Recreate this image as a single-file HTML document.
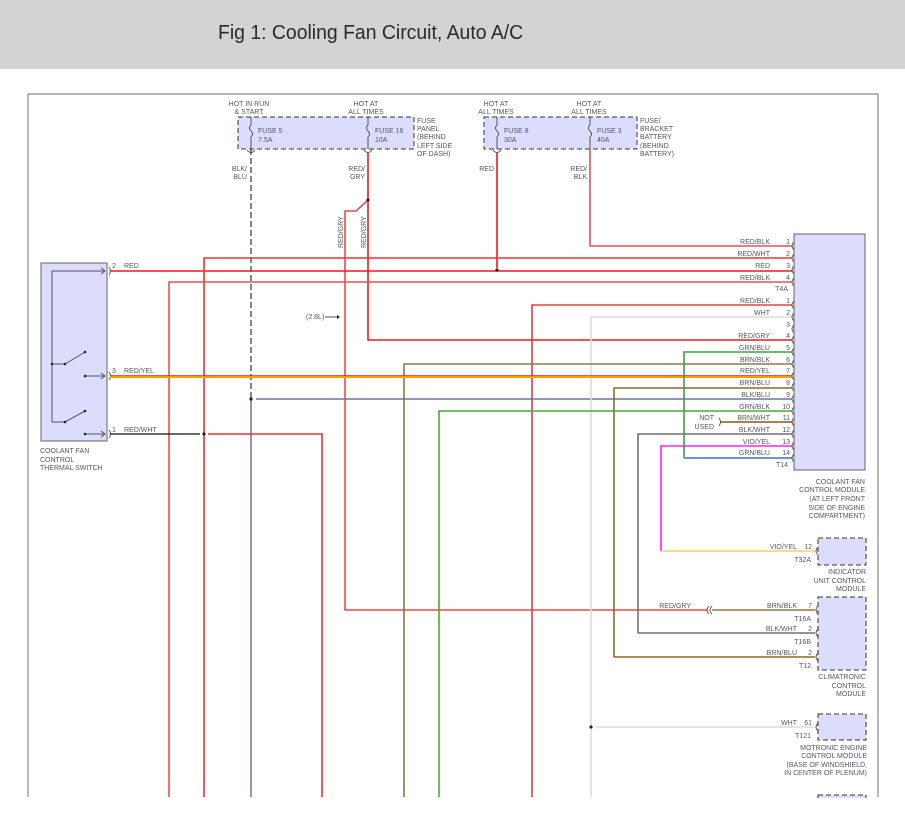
<!DOCTYPE html>
<html><head><meta charset="utf-8"><style>
html,body{margin:0;padding:0;background:#fff;width:905px;height:821px;overflow:hidden}
.hdr{position:absolute;left:0;top:0;width:905px;height:69px;background:#d3d3d3}
.ttl{position:absolute;left:218px;top:22px;font:20px "Liberation Sans",sans-serif;color:#2a2a2a;transform:scaleX(0.97);transform-origin:left top;white-space:nowrap}
svg{position:absolute;left:0;top:0}
text{font-family:"Liberation Sans",sans-serif;font-size:7px;fill:#555566}
</style></head><body>
<div class="hdr"></div>
<div class="ttl">Fig 1: Cooling Fan Circuit, Auto A/C</div>
<svg width="905" height="821" viewBox="0 0 905 821">
<path d="M28,797 V94 H878 V797" fill="none" stroke="#8a8a8a" stroke-width="1.2"/>
<rect x="238" y="117" width="176" height="32" fill="#dcdcfc" stroke="#333" stroke-dasharray="5,3"/>
<rect x="484" y="117" width="153" height="32" fill="#dcdcfc" stroke="#333" stroke-dasharray="5,3"/>
<g fill="none" stroke="#333" stroke-width="0.8">
<path d="M251,117 v8 q-3,3 0,6 q3,3 0,6 v12"/>
<path d="M368,117 v8 q-3,3 0,6 q3,3 0,6 v12"/>
<path d="M497,117 v8 q-3,3 0,6 q3,3 0,6 v12"/>
<path d="M590,117 v8 q-3,3 0,6 q3,3 0,6 v12"/>
<path d="M247,150 q4,5 8,0 M364,150 q4,5 8,0 M493,150 q4,5 8,0"/>
</g>
<g text-anchor="middle">
<text x="249" y="106">HOT IN RUN</text><text x="249" y="114">&amp; START</text>
<text x="366" y="106">HOT AT</text><text x="366" y="114">ALL TIMES</text>
<text x="496" y="106">HOT AT</text><text x="496" y="114">ALL TIMES</text>
<text x="589" y="106">HOT AT</text><text x="589" y="114">ALL TIMES</text>
</g>
<text x="258" y="133">FUSE 5</text><text x="258" y="142">7.5A</text>
<text x="375" y="133">FUSE 16</text><text x="375" y="142">10A</text>
<text x="504" y="133">FUSE 8</text><text x="504" y="142">30A</text>
<text x="597" y="133">FUSE 3</text><text x="597" y="142">40A</text>
<text x="417" y="123">FUSE</text><text x="417" y="131">PANEL</text><text x="417" y="139">(BEHIND</text><text x="417" y="148">LEFT SIDE</text><text x="417" y="156">OF DASH)</text>
<text x="640" y="123">FUSE/</text><text x="640" y="131">BRACKET</text><text x="640" y="139">BATTERY</text><text x="640" y="148">(BEHIND</text><text x="640" y="156">BATTERY)</text>
<g text-anchor="end">
<text x="247" y="171">BLK/</text><text x="247" y="179">BLU</text>
<text x="365" y="171">RED/</text><text x="365" y="179">GRY</text>
<text x="494" y="171">RED</text>
<text x="587" y="171">RED/</text><text x="587" y="179">BLK</text>
</g>
<text transform="translate(343,248) rotate(-90)">RED/GRY</text>
<text transform="translate(366,248) rotate(-90)">RED/GRY</text>
<rect x="41" y="263" width="66" height="178" fill="#dcdcfc" stroke="#666"/>
<g fill="none" stroke="#555" stroke-width="1">
<path d="M104,271 H52 V422 H65 L85,411 M52,364 H65 L85,352 M85,376 H105 M85,434 H105"/>
<path d="M101,268 l4,3 l-4,3 M101,373 l4,3 l-4,3 M101,431 l4,3 l-4,3"/>
<path d="M109,267 q3,4 0,8 M109,372 q3,4 0,8 M109,430 q3,4 0,8"/>
</g>
<g fill="#222"><circle cx="52" cy="364" r="1.3"/><circle cx="65" cy="364" r="1.3"/><circle cx="85" cy="352" r="1.3"/><circle cx="65" cy="422" r="1.3"/><circle cx="85" cy="411" r="1.3"/><circle cx="85" cy="376" r="1.3"/><circle cx="85" cy="434" r="1.3"/></g>
<text x="112" y="268">2</text><text x="124" y="268">RED</text>
<text x="112" y="373">3</text><text x="124" y="373">RED/YEL</text>
<text x="112" y="432">1</text><text x="124" y="432">RED/WHT</text>
<text x="40" y="453">COOLANT FAN</text><text x="40" y="462">CONTROL</text><text x="40" y="470">THERMAL SWITCH</text>
<g fill="none" stroke-width="1.6">
<path d="M251,149 V399" stroke="#333" stroke-dasharray="6,3" stroke-width="1.2"/>
<path d="M251,399 V797" stroke="#7878a8"/>
<path d="M256,399 H792" stroke="#7070a8"/>
<path d="M368,153 V200 M368,200 V340 H792" stroke="#f01818"/>
<path d="M368,200 L356,211 H345 V610 H707" stroke="#f04848"/>
<path d="M497,153 V268" stroke="#f01818"/>
<path d="M590,149 V246 H792" stroke="#e85050"/>
<path d="M110,271 H792" stroke="#f01818"/>
<path d="M204,797 V258 H792" stroke="#f03030"/>
<path d="M169,797 V282 H792" stroke="#e85050"/>
<path d="M532,797 V305 H792" stroke="#e04040"/>
<path d="M591,797 V317 H792" stroke="#dcdcdc"/>
<path d="M596,727 H815" stroke="#dcdcdc"/>
<path d="M110,434 H200" stroke="#111" stroke-width="1.2"/>
<path d="M208,434 H322 V797" stroke="#f03030"/>
<path d="M404,797 V364 H792" stroke="#8a7a48"/>
<path d="M110,377 H792" stroke="#f0a000" stroke-width="2"/>
<path d="M110,375.5 H792" stroke="#f01818" stroke-width="0.8"/>
<path d="M614,657 V388 H792" stroke="#8a6a28"/>
<path d="M614,657 H815" stroke="#8a6a28"/>
<path d="M439,797 V411 H792" stroke="#40b030"/>
<path d="M720,422 H792" stroke="#8a5a10"/>
<path d="M638,633 V434 H792" stroke="#707070"/>
<path d="M661,551 V446 H792" stroke="#ff20ff"/>
<path d="M661,551 H815" stroke="#e0c000" stroke-width="1"/>
<path d="M684,458 V352 H792" stroke="#40a040"/>
<path d="M684,458 H792" stroke="#4070c0"/>
<path d="M638,633 H815" stroke="#707070"/>
<path d="M712,610 H815" stroke="#8a7a48"/>
</g>
<g fill="#222">
<circle cx="368" cy="200" r="1.6"/><circle cx="497" cy="270" r="1.6"/><circle cx="204" cy="434" r="1.6"/><circle cx="251" cy="399" r="1.6"/><circle cx="591" cy="727" r="1.6"/>
</g>
<text x="306" y="319">(2.8L)</text>
<path d="M325,317 H338" stroke="#222" stroke-width="0.8"/><path d="M337,315 l3,2 l-3,2z" fill="#222"/>
<rect x="794" y="234" width="71" height="236" fill="#dcdcfc" stroke="#666"/>
<g fill="none" stroke="#444" stroke-width="0.8">
<path d="M794,242 q-4,4 0,8 M794,254 q-4,4 0,8 M794,266 q-4,4 0,8 M794,278 q-4,4 0,8 M794,301 q-4,4 0,8 M794,313 q-4,4 0,8 M794,325 q-4,4 0,8 M794,336 q-4,4 0,8 M794,348 q-4,4 0,8 M794,360 q-4,4 0,8 M794,372 q-4,4 0,8 M794,383 q-4,4 0,8 M794,395 q-4,4 0,8 M794,407 q-4,4 0,8 M794,418 q-4,4 0,8 M794,430 q-4,4 0,8 M794,442 q-4,4 0,8 M794,454 q-4,4 0,8"/>
<path d="M719,418 q3,4 0,8"/>
<path d="M712,606 q-4,4 0,8 M709,606 q-4,4 0,8"/>
<path d="M818,547 q-4,4 0,8 M818,606 q-4,4 0,8 M818,629 q-4,4 0,8 M818,653 q-4,4 0,8 M818,723 q-4,4 0,8"/>
</g>
<g text-anchor="end">
<text x="770" y="244">RED/BLK</text><text x="790" y="244">1</text>
<text x="770" y="256">RED/WHT</text><text x="790" y="256">2</text>
<text x="770" y="268">RED</text><text x="790" y="268">3</text>
<text x="770" y="280">RED/BLK</text><text x="790" y="280">4</text>
<text x="788" y="291">T4A</text>
<text x="770" y="303">RED/BLK</text><text x="790" y="303">1</text>
<text x="770" y="315">WHT</text><text x="790" y="315">2</text>
<text x="790" y="327">3</text>
<text x="770" y="338">RED/GRY</text><text x="790" y="338">4</text>
<text x="770" y="350">GRN/BLU</text><text x="790" y="350">5</text>
<text x="770" y="362">BRN/BLK</text><text x="790" y="362">6</text>
<text x="770" y="373">RED/YEL</text><text x="790" y="373">7</text>
<text x="770" y="385">BRN/BLU</text><text x="790" y="385">8</text>
<text x="770" y="397">BLK/BLU</text><text x="790" y="397">9</text>
<text x="770" y="409">GRN/BLK</text><text x="790" y="409">10</text>
<text x="770" y="420">BRN/WHT</text><text x="790" y="420">11</text>
<text x="770" y="432">BLK/WHT</text><text x="790" y="432">12</text>
<text x="770" y="444">VIO/YEL</text><text x="790" y="444">13</text>
<text x="770" y="455">GRN/BLU</text><text x="790" y="455">14</text>
<text x="788" y="467">T14</text>
<text x="714" y="420">NOT</text><text x="714" y="429">USED</text>
<text x="865" y="484">COOLANT FAN</text><text x="865" y="492">CONTROL MODULE</text><text x="865" y="501">(AT LEFT FRONT</text><text x="865" y="510">SIDE OF ENGINE</text><text x="865" y="518">COMPARTMENT)</text>
<text x="797" y="549">VIO/YEL</text><text x="812" y="549">12</text>
<text x="811" y="562">T32A</text>
<text x="866" y="574">INDICATOR</text><text x="866" y="583">UNIT CONTROL</text><text x="866" y="591">MODULE</text>
<text x="691" y="608">RED/GRY</text>
<text x="797" y="608">BRN/BLK</text><text x="812" y="608">7</text>
<text x="811" y="621">T16A</text>
<text x="797" y="631">BLK/WHT</text><text x="812" y="631">2</text>
<text x="811" y="644">T16B</text>
<text x="797" y="655">BRN/BLU</text><text x="812" y="655">2</text>
<text x="811" y="668">T12</text>
<text x="866" y="679">CLIMATRONIC</text><text x="866" y="688">CONTROL</text><text x="866" y="696">MODULE</text>
<text x="797" y="725">WHT</text><text x="812" y="725">61</text>
<text x="811" y="738">T121</text>
<text x="867" y="750">MOTRONIC ENGINE</text><text x="867" y="758">CONTROL MODULE</text><text x="867" y="767">(BASE OF WINDSHIELD,</text><text x="867" y="775">IN CENTER OF PLENUM)</text>
</g>
<rect x="818" y="538" width="48" height="27" fill="#dcdcfc" stroke="#333" stroke-dasharray="5,3"/>
<rect x="818" y="597" width="48" height="73" fill="#dcdcfc" stroke="#333" stroke-dasharray="5,3"/>
<rect x="818" y="714" width="48" height="26" fill="#dcdcfc" stroke="#333" stroke-dasharray="5,3"/>
<rect x="818" y="795" width="48" height="10" fill="#dcdcfc" stroke="#333" stroke-dasharray="5,3"/>
<rect x="0" y="798" width="905" height="23" fill="#fff"/>
</svg>
</body></html>
